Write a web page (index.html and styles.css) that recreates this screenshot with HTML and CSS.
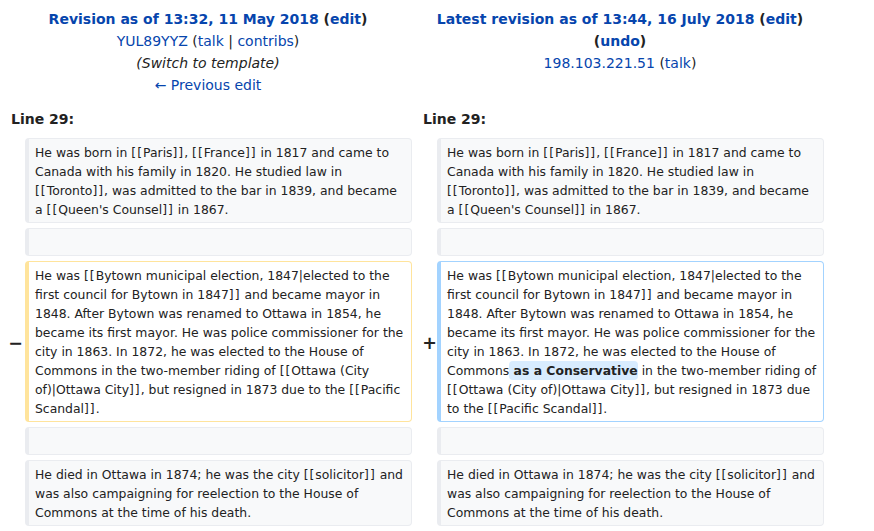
FILE: index.html
```html
<!DOCTYPE html>
<html lang="en">
<head>
<meta charset="utf-8">
<title>Diff</title>
<link rel="stylesheet" href="styles.css">
</head>
<body>
<div class="diff">
  <div class="diff-title">
    <div class="title-line"><strong><a href="#">Revision as of 13:32, 11 May 2018</a> (<a href="#">edit</a>)</strong></div>
    <div class="title-line"><a href="#">YUL89YYZ</a> (<a href="#">talk</a> | <a href="#">contribs</a>)</div>
    <div class="title-line"><em>(Switch to template)</em></div>
    <div class="title-line"><a href="#">← Previous edit</a></div>
  </div>
  <div class="diff-title">
    <div class="title-line"><strong><a href="#">Latest revision as of 13:44, 16 July 2018</a> (<a href="#">edit</a>)</strong></div>
    <div class="title-line"><strong>(<a href="#">undo</a>)</strong></div>
    <div class="title-line"><a href="#">198.103.221.51</a> (<a href="#">talk</a>)</div>
  </div>

  <div class="diff-lineno">Line 29:</div>
  <div class="diff-lineno">Line 29:</div>

  <div class="diff-marker"></div>
  <div class="diff-cell diff-context">
    <span class="ln">He was born in <span class="bk">[[</span>Paris<span class="bk">]]</span>, <span class="bk">[[</span>France<span class="bk">]]</span> in 1817 and came to</span>
    <span class="ln">Canada with his family in 1820. He studied law in</span>
    <span class="ln"><span class="bk">[[</span>Toronto<span class="bk">]]</span>, was admitted to the bar in 1839, and became</span>
    <span class="ln">a <span class="bk">[[</span>Queen's Counsel<span class="bk">]]</span> in 1867.</span>
  </div>
  <div class="diff-marker"></div>
  <div class="diff-cell diff-context">
    <span class="ln">He was born in <span class="bk">[[</span>Paris<span class="bk">]]</span>, <span class="bk">[[</span>France<span class="bk">]]</span> in 1817 and came to</span>
    <span class="ln">Canada with his family in 1820. He studied law in</span>
    <span class="ln"><span class="bk">[[</span>Toronto<span class="bk">]]</span>, was admitted to the bar in 1839, and became</span>
    <span class="ln">a <span class="bk">[[</span>Queen's Counsel<span class="bk">]]</span> in 1867.</span>
  </div>

  <div class="diff-marker"></div>
  <div class="diff-cell diff-context"><span class="ln empty"></span></div>
  <div class="diff-marker"></div>
  <div class="diff-cell diff-context"><span class="ln empty"></span></div>

  <div class="diff-marker deleted">−</div>
  <div class="diff-cell diff-deletedline">
    <span class="ln">He was <span class="bk">[[</span>Bytown municipal election, 1847|elected to the</span>
    <span class="ln">first council for Bytown in 1847<span class="bk">]]</span> and became mayor in</span>
    <span class="ln">1848. After Bytown was renamed to Ottawa in 1854, he</span>
    <span class="ln">became its first mayor. He was police commissioner for the</span>
    <span class="ln">city in 1863. In 1872, he was elected to the House of</span>
    <span class="ln">Commons in the two-member riding of <span class="bk">[[</span>Ottawa (City</span>
    <span class="ln">of)|Ottawa City<span class="bk">]]</span>, but resigned in 1873 due to the <span class="bk">[[</span>Pacific</span>
    <span class="ln">Scandal<span class="bk">]]</span>.</span>
  </div>
  <div class="diff-marker added">+</div>
  <div class="diff-cell diff-addedline">
    <span class="ln">He was <span class="bk">[[</span>Bytown municipal election, 1847|elected to the</span>
    <span class="ln">first council for Bytown in 1847<span class="bk">]]</span> and became mayor in</span>
    <span class="ln">1848. After Bytown was renamed to Ottawa in 1854, he</span>
    <span class="ln">became its first mayor. He was police commissioner for the</span>
    <span class="ln">city in 1863. In 1872, he was elected to the House of</span>
    <span class="ln">Commons<ins class="diffchange">&nbsp;as a Conservative</ins> in the two-member riding of</span>
    <span class="ln"><span class="bk">[[</span>Ottawa (City of)|Ottawa City<span class="bk">]]</span>, but resigned in 1873 due</span>
    <span class="ln">to the <span class="bk">[[</span>Pacific Scandal<span class="bk">]]</span>.</span>
  </div>

  <div class="diff-marker"></div>
  <div class="diff-cell diff-context"><span class="ln empty"></span></div>
  <div class="diff-marker"></div>
  <div class="diff-cell diff-context"><span class="ln empty"></span></div>

  <div class="diff-marker"></div>
  <div class="diff-cell diff-context">
    <span class="ln">He died in Ottawa in 1874; he was the city <span class="bk">[[</span>solicitor<span class="bk">]]</span> and</span>
    <span class="ln">was also campaigning for reelection to the House of</span>
    <span class="ln">Commons at the time of his death.</span>
  </div>
  <div class="diff-marker"></div>
  <div class="diff-cell diff-context">
    <span class="ln">He died in Ottawa in 1874; he was the city <span class="bk">[[</span>solicitor<span class="bk">]]</span> and</span>
    <span class="ln">was also campaigning for reelection to the House of</span>
    <span class="ln">Commons at the time of his death.</span>
  </div>
</div>
</body>
</html>
```

FILE: styles.css
```css
html, body {
  margin: 0;
  padding: 0;
  background: #fff;
}

body {
  font-family: "DejaVu Sans", sans-serif;
  color: #222;
  font-size: 14px;
}

a {
  color: #0645ad;
  text-decoration: none;
}

.diff {
  display: grid;
  grid-template-columns: 17px 387px 17px 387px;
  column-gap: 4px;
  row-gap: 5px;
  padding: 8px 0 0 4px;
}

.diff-title {
  grid-column: span 2;
  text-align: center;
  line-height: 22px;
}

.title-line strong {
  font-weight: bold;
}

.title-line em {
  font-style: italic;
}

.diff-lineno {
  grid-column: span 2;
  font-weight: bold;
  line-height: 22px;
  padding: 7px 7px 3px;
}

.diff-marker {
  display: flex;
  align-items: center;
  justify-content: flex-end;
  font-weight: bold;
  font-size: 17.5px;
  line-height: 1.2;
}

.diff-marker.deleted {
  margin-right: -2px;
  padding-top: 3px;
}

.diff-marker.added {
  margin-right: -4px;
  padding-top: 3px;
}

.diff-cell {
  font-size: 12.4px;
  line-height: 19px;
  padding: 3.5px 6px;
  border-style: solid;
  border-width: 1px 1px 1px 4px;
  border-radius: 4px;
  overflow-wrap: break-word;
}

.ln {
  display: block;
  height: 19px;
  white-space: nowrap;
}

.bk {
  letter-spacing: 1px;
}

.diff-context {
  background: #f8f9fa;
  border-color: #eaecf0;
  color: #222;
}

.diff-deletedline {
  border-color: #ffe49c;
  background: #fff;
}

.diff-addedline {
  border-color: #a3d3ff;
  background: #fff;
}

.diffchange {
  font-weight: bold;
  text-decoration: none;
  background: #d8ecff;
  border-radius: 4px;
  padding: 2px 0;
}
```
